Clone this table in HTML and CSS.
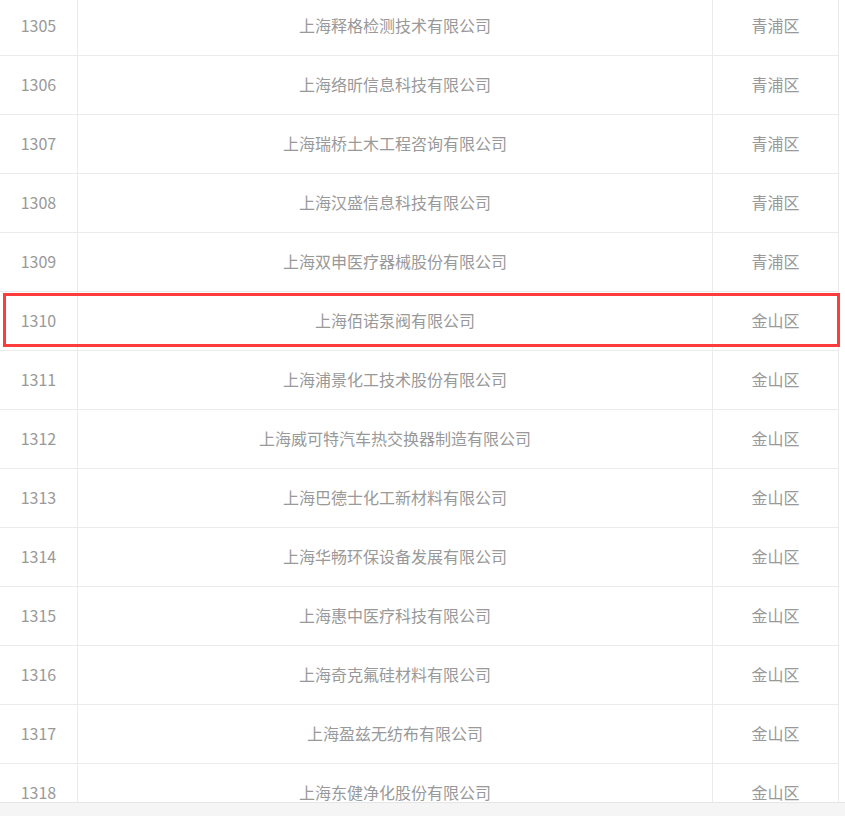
FILE: index.html
```html
<!DOCTYPE html>
<html lang="zh-CN">
<head>
    <meta charset="UTF-8">
    <meta name="viewport" content="width=device-width, initial-scale=1.0">
    <title>企业名单</title>
    <link rel="stylesheet" href="styles.css">
</head>
<body>
    <div class="list-wrap">
        <table class="company-table">
            <colgroup>
                <col class="col-no">
                <col class="col-name">
                <col class="col-area">
            </colgroup>
            <tbody>
                <tr><td class="no">1305</td><td>上海释格检测技术有限公司</td><td>青浦区</td></tr>
                <tr><td class="no">1306</td><td>上海络昕信息科技有限公司</td><td>青浦区</td></tr>
                <tr><td class="no">1307</td><td>上海瑞桥土木工程咨询有限公司</td><td>青浦区</td></tr>
                <tr><td class="no">1308</td><td>上海汉盛信息科技有限公司</td><td>青浦区</td></tr>
                <tr><td class="no">1309</td><td>上海双申医疗器械股份有限公司</td><td>青浦区</td></tr>
                <tr><td class="no">1310</td><td>上海佰诺泵阀有限公司</td><td>金山区</td></tr>
                <tr><td class="no">1311</td><td>上海浦景化工技术股份有限公司</td><td>金山区</td></tr>
                <tr><td class="no">1312</td><td>上海威可特汽车热交换器制造有限公司</td><td>金山区</td></tr>
                <tr><td class="no">1313</td><td>上海巴德士化工新材料有限公司</td><td>金山区</td></tr>
                <tr><td class="no">1314</td><td>上海华畅环保设备发展有限公司</td><td>金山区</td></tr>
                <tr><td class="no">1315</td><td>上海惠中医疗科技有限公司</td><td>金山区</td></tr>
                <tr><td class="no">1316</td><td>上海奇克氟硅材料有限公司</td><td>金山区</td></tr>
                <tr><td class="no">1317</td><td>上海盈兹无纺布有限公司</td><td>金山区</td></tr>
                <tr><td class="no">1318</td><td>上海东健净化股份有限公司</td><td>金山区</td></tr>
            </tbody>
        </table>
        <!-- highlight on row 1310 -->
        <div class="mark"></div>
    </div>
    <div class="scroll-bar"></div>
</body>
</html>
```

FILE: styles.css
```css
html, body {
    margin: 0;
    padding: 0;
    background: #fff;
    overflow: hidden;
}
body {
    font-family: "Noto Sans CJK SC", "Noto Sans", sans-serif;
    color: #999;
}
.list-wrap {
    position: relative;
    height: 802px;
    overflow: hidden;
}
.company-table {
    table-layout: fixed;
    width: 839px;
    margin-top: -3px;
    border-collapse: separate;
    border-spacing: 0;
}
.col-no {
    width: 78px;
}
.col-name {
    width: 635px;
}
.col-area {
    width: 126px;
}
.company-table td {
    height: 56px;
    padding: 0 0 2px;
    border-right: 1px solid #ebebeb;
    border-bottom: 1px solid #ebebeb;
    text-align: center;
    vertical-align: middle;
    font-size: 16px;
    line-height: 20px;
    white-space: nowrap;
}
.mark {
    position: absolute;
    left: 3px;
    top: 293px;
    width: 837px;
    height: 54px;
    box-sizing: border-box;
    border: 3px solid #fd3c3c;
}
.scroll-bar {
    height: 13px;
    background: #f5f5f5;
    border-top: 1px solid #e6e6e6;
}
```
